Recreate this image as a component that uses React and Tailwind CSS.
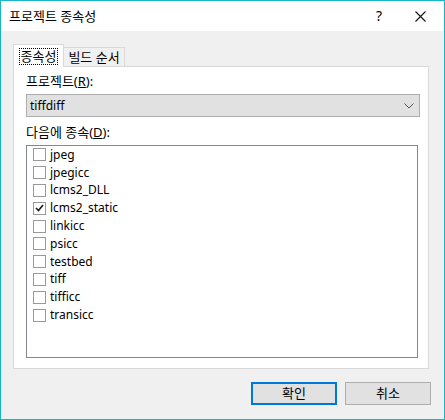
import React from "react";

const items = [
  { name: "jpeg", checked: false },
  { name: "jpegicc", checked: false },
  { name: "lcms2_DLL", checked: false },
  { name: "lcms2_static", checked: true },
  { name: "linkicc", checked: false },
  { name: "psicc", checked: false },
  { name: "testbed", checked: false },
  { name: "tiff", checked: false },
  { name: "tifficc", checked: false },
  { name: "transicc", checked: false },
];

const font = { fontFamily: '"Noto Sans", "Noto Sans CJK KR", sans-serif' };

const CheckBox = ({ checked }) => (
  <span className="w-[13px] h-[13px] border border-[#999999] bg-white flex items-center justify-center shrink-0">
    {checked && (
      <svg width="9" height="8" viewBox="0 0 9 8">
        <path d="M1 4 L3.5 6.5 L8 1" stroke="#1a1a1a" strokeWidth="1.6" fill="none" />
      </svg>
    )}
  </span>
);

const App = () => {
  return (
    <div
      className="w-[445px] h-[420px] border border-[#18b5c8] bg-[#f0f0f0] flex flex-col text-[13px] text-black"
      style={font}
    >
      {/* title bar */}
      <div className="h-[30px] bg-white flex items-center shrink-0">
        <span className="pl-[8px] leading-none">프로젝트 종속성</span>
        <span className="ml-auto mr-[33px] text-[14px] leading-none">?</span>
        <svg className="mr-[18px]" width="11" height="11" viewBox="0 0 11 11">
          <path d="M0.5 0.5 L10.5 10.5 M10.5 0.5 L0.5 10.5" stroke="#111" strokeWidth="1.1" />
        </svg>
      </div>

      {/* body */}
      <div className="flex flex-col pl-[12px] pt-[13px] flex-1">
        {/* tabs */}
        <div className="flex items-end h-[23px] relative z-10">
          <div className="w-[51px] h-[23px] bg-white border border-b-0 border-[#d9d9d9] flex items-center justify-center">
            <span className="border border-dotted border-black px-[1px] leading-[15px]">종속성</span>
          </div>
          <div className="w-[61px] h-[20px] border border-l-0 border-b-0 border-[#d9d9d9] flex items-center justify-center">
            빌드 순서
          </div>
        </div>

        {/* panel */}
        <div className="w-[416px] h-[303px] -mt-[1px] bg-white border border-[#d9d9d9] pl-[12px] pt-[5px] flex flex-col">
          <div className="h-[20px] flex items-center">
            <span>
              프로젝트(<span className="underline">R</span>):
            </span>
          </div>
          <div className="mt-[2px] w-[394px] h-[23px] bg-[#e1e1e1] border border-[#adadad] flex items-center pl-[3px] pr-[5px]">
            <span className="text-[12px]">tiffdiff</span>
            <svg className="ml-auto" width="10" height="6" viewBox="0 0 10 6">
              <path d="M0.5 0.5 L5 5 L9.5 0.5" stroke="#555" strokeWidth="1" fill="none" />
            </svg>
          </div>
          <div className="mt-[6px] h-[20px] flex items-center">
            <span>
              다음에 종속(<span className="underline">D</span>):
            </span>
          </div>
          <div className="mt-[2px] w-[392px] h-[213px] border border-[#828790] bg-white flex flex-col pl-[6px]">
            {items.map((item) => (
              <div key={item.name} className="h-[17.8px] flex items-center gap-[4px]">
                <CheckBox checked={item.checked} />
                <span className="text-[12px] leading-none">{item.name}</span>
              </div>
            ))}
          </div>
        </div>

        {/* buttons */}
        <div className="flex justify-end gap-[8px] mt-[13px] pr-[13px]">
          <button className="w-[86px] h-[23px] bg-[#e1e1e1] border-2 border-[#0078d7] flex items-center justify-center">
            확인
          </button>
          <button className="w-[86px] h-[23px] bg-[#e1e1e1] border border-[#adadad] flex items-center justify-center">
            취소
          </button>
        </div>
      </div>
    </div>
  );
};

export default App;
